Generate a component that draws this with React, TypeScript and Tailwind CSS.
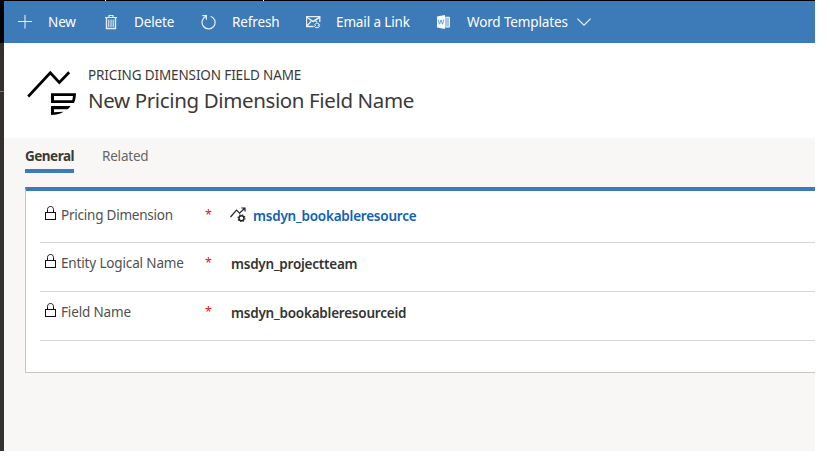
import type { ReactNode } from "react";

const LockIcon = () => (
  <svg className="block" width="11" height="14" viewBox="0 0 11 14" fill="none" stroke="#111">
    <rect x="0.5" y="6.5" width="10" height="7" />
    <path d="M2.5 6.5V3.6C2.5 1.6 3.7.5 5.5.5S8.500 1.600 8.500 3.600V6.500" />
  </svg>
);

const PlusIcon = () => (
  <svg className="block" width="14" height="14" viewBox="0 0 14 14" stroke="#e6eef7">
    <path d="M0 6.500H14M7 0V13.500" strokeWidth="1.100" />
  </svg>
);

const TrashIcon = () => (
  <svg className="block" width="12" height="15" viewBox="0 0 12 15" fill="none" stroke="#e6eef7">
    <path d="M0 2.500H12M4 2V.5H8V2" strokeWidth="1.200" />
    <path d="M1.500 3V13.500H10.500V3" strokeWidth="1.400" />
    <path d="M3.800 4.500V12M6 4.500V12M8.200 4.500V12" strokeWidth="1.100" />
  </svg>
);

const RefreshIcon = () => (
  <svg className="block" width="15" height="15" viewBox="0 0 15 15" fill="none" stroke="#e6eef7" strokeWidth="1.200">
    <path d="M9.600 1.200A6.500 6.500 0 1 1 5 1.400M1.300.6H5.400V4.800" />
  </svg>
);

const MailLinkIcon = () => (
  <svg className="block" width="15" height="13" viewBox="0 0 15 13" fill="none" stroke="#e6eef7">
    <path d="M.5 1L7.200 5.500L14 1" strokeWidth="1.500" />
    <path d="M7.500 10.500H.5V.7H13.800V6M.8 10L5.200 5.200M9.500 4.800L11 6" strokeWidth="1.300" />
    <path d="M8.200 9.200L10 7.200H12.400L13.300 8.500L11.800 10.200M12.300 8.200L13.800 9.500L12.500 11.600H9.500L8.500 10.400L10 9" />
  </svg>
);

const WordIcon = () => (
  <svg className="block" width="13" height="14" viewBox="0 0 13 14">
    <path d="M8 2H12.700V12.300H8Z" fill="#a9c6e4" />
    <path d="M0 1.600L8 0V14L0 12.400Z" fill="#f5f9fd" />
    <path d="M8.500 2.200H12.500V12H8.500" fill="none" stroke="#e6eef7" />
    <path d="M1.300 4.800L2.500 9.200L4 5L5.500 9.200L6.700 4.600" fill="none" stroke="#6497cd" strokeWidth=".9" />
  </svg>
);

const ChevronIcon = () => (
  <svg className="block" width="14" height="8" viewBox="0 0 14 8" fill="none" stroke="#e6eef7">
    <path d="M.4.6L7 7.200L13.600.6" strokeWidth="1.200" />
  </svg>
);

const EntityIcon = () => (
  <svg className="block" width="50" height="46" viewBox="0 0 50 46" fill="none" stroke="#000">
    <path d="M1.200 26.500L23.300 2.800L32.300 12.500L42.200 2.300" strokeWidth="2.700" />
    <path
      d="M24 23.300H49C48.900 27 48.300 30.300 47 33H24ZM27 26V30.200H45.300L46 26Z"
      fill="#000"
      fillRule="evenodd"
      stroke="none"
    />
    <path
      d="M24 36H43.600C42.600 37.500 41.600 38.500 40.300 39.300H27V42.200L36.500 41.700C33 44 29 45 24 45Z"
      fill="#000"
      stroke="none"
    />
  </svg>
);

const LookupIcon = () => (
  <svg className="block" width="17" height="16" viewBox="0 0 17 16" fill="none" stroke="#222">
    <path d="M.5 11L6.500 4.200L9.500 7.200L14.700 2.300M11.300 2H15V5.500" strokeWidth="1.200" />
    <circle cx="11.500" cy="12.200" r="2.500" strokeWidth="1.400" />
    <circle cx="11.500" cy="12.200" r="3.500" strokeWidth="1.100" strokeDasharray="1.370 1.370" />
  </svg>
);

function Command({ icon, label, gap, className }: { icon: ReactNode; label: string; gap: string; className: string }) {
  return (
    <button className={`flex h-full shrink-0 items-center ${className}`}>
      <span className={`flex shrink-0 ${gap}`}>{icon}</span>
      <span className="whitespace-nowrap text-[13.5px] leading-5 text-white">{label}</span>
    </button>
  );
}

function Field({ label, tracking, height, children }: { label: string; tracking: string; height: string; children: ReactNode }) {
  return (
    <div className={`flex items-start border-b border-[#d6d6d6] pl-[5px] ${height}`}>
      <LockIcon />
      <span className={`-mt-px ml-[5px] w-[144px] shrink-0 whitespace-nowrap text-[13.5px] leading-5 text-[#505050] ${tracking}`}>{label}</span>
      <span className="-mt-px w-[25px] shrink-0 text-[12.5px] leading-5 text-[#e81111]">*</span>
      <div className="flex text-[13.5px] font-semibold leading-5">{children}</div>
    </div>
  );
}

export default function App() {
  return (
    <div className="h-[462px] w-[830px] overflow-hidden bg-white font-['Noto_Sans','Open_Sans',sans-serif]">
      <div className="flex h-[451px] w-[815px]">
        <aside className="flex w-1 shrink-0 flex-col bg-[#33302d]">
          <div className="h-[43px] bg-black" />
          <div className="mt-12 h-px bg-[#777]" />
        </aside>
        <main className="flex min-w-0 grow flex-col bg-[#f8f7f6]">
          <div className="flex h-px shrink-0 bg-black">
            <i className="ml-[101px] w-px bg-white" />
            <i className="ml-[157px] w-px bg-white" />
          </div>
          <nav className="flex h-[42px] shrink-0 items-center bg-[#3c7ab8] pl-[14px] tracking-[-0.13px]">
            <Command icon={<PlusIcon />} label="New" gap="w-[30px]" className="w-[87px]" />
            <Command icon={<TrashIcon />} label="Delete" gap="w-[29px]" className="w-[96px]" />
            <Command icon={<RefreshIcon />} label="Refresh" gap="w-[31px]" className="w-[105px]" />
            <Command icon={<MailLinkIcon />} label="Email a Link" gap="w-[30px]" className="w-[131px]" />
            <Command icon={<WordIcon />} label="Word Templates" gap="w-[30px]" className="w-[140px]" />
            <ChevronIcon />
          </nav>
          <header className="flex h-[95px] shrink-0 bg-white pl-[23px] pt-[27px]">
            <EntityIcon />
            <div className="-mt-[5px] ml-[11px] whitespace-nowrap text-[#3b3a39]">
              <p className="text-[13.5px] leading-5 tracking-[-0.13px]">PRICING DIMENSION FIELD NAME</p>
              <h1 className="text-[20.5px] leading-[30px] tracking-[-0.37px]">New Pricing Dimension Field Name</h1>
            </div>
          </header>
          <div className="flex h-[49px] shrink-0 gap-7 pl-[21px] pt-2 text-[13.5px] leading-5">
            <div className="flex h-[27px] w-[49px] flex-col justify-between whitespace-nowrap font-bold tracking-[-0.5px] text-[#3b3a39]">
              <span>General</span>
              <i className="h-1 shrink-0 bg-[#3c7ab8]" />
            </div>
            <span className="tracking-[-0.2px] text-[#666]">Related</span>
          </div>
          <section className="ml-[21px] flex h-[186px] shrink-0 flex-col border-b border-l border-b-[#c8c6c4] border-l-[#c8c6c4] border-t-4 border-t-[#3c7ab8] bg-white pl-[14px]">
            <Field label="Pricing Dimension" tracking="tracking-[-0.23px]" height="h-[52px] pt-[15px]">
              <LookupIcon />
              <a className="ml-[6px] tracking-[-0.22px] text-[#1160b7]">msdyn_bookableresource</a>
            </Field>
            <Field label="Entity Logical Name" tracking="tracking-[-0.15px]" height="h-[49px] pt-[11px]">
              <span className="ml-px tracking-[-0.24px] text-[#333]">msdyn_projectteam</span>
            </Field>
            <Field label="Field Name" tracking="tracking-[-0.15px]" height="h-[49px] pt-[11px]">
              <span className="ml-px tracking-[-0.22px] text-[#333]">msdyn_bookableresourceid</span>
            </Field>
          </section>
        </main>
      </div>
    </div>
  );
}
